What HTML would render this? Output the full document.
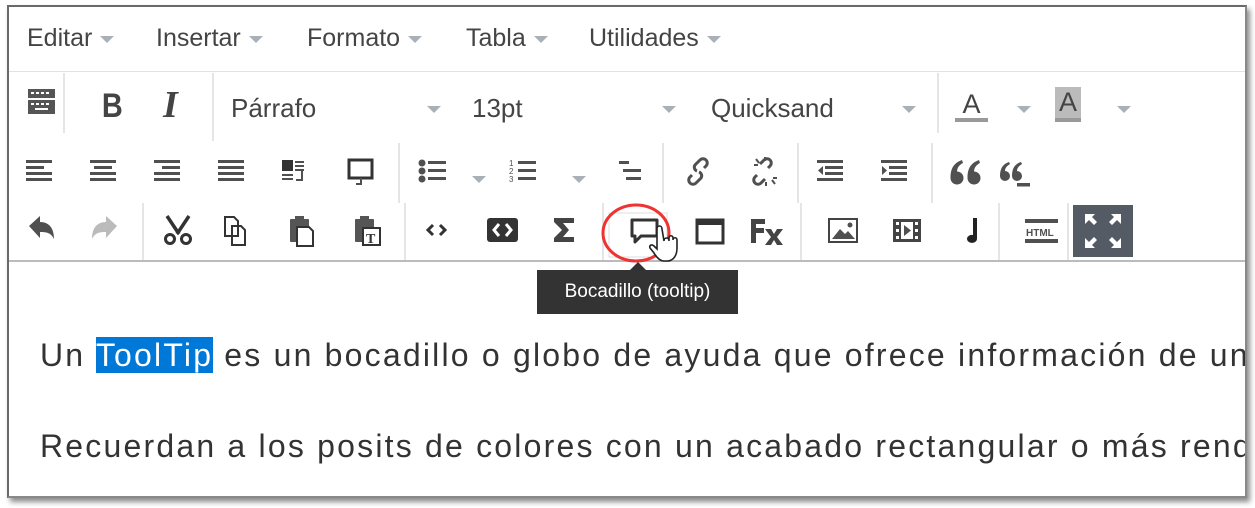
<!DOCTYPE html>
<html><head><meta charset="utf-8"><style>
*{margin:0;padding:0;box-sizing:border-box}
body{width:1255px;height:508px;background:#fff;position:relative;overflow:hidden;font-family:"Liberation Sans",sans-serif}
#frame{position:absolute;left:7px;top:5px;width:1240px;height:493px;border:2px solid #6a6a6a;border-right-color:#888;border-bottom-color:#888;box-shadow:3px 4px 5px rgba(0,0,0,.45);background:#fff;overflow:hidden}
.abs{position:absolute}
.menu{font-size:25px;color:#444;top:17px}
.car{display:inline-block;width:0;height:0;border-left:7px solid transparent;border-right:7px solid transparent;border-top:7px solid #aab0b8;vertical-align:middle;margin-left:8px}
.hl{position:absolute;height:1px;background:#e2e2e6}
.vl{position:absolute;width:2px;background:#e5e5e8}
.sel{font-size:26px;color:#444;top:86px}
svg.i{position:absolute}
.txt{position:absolute;left:31px;font-size:32px;color:#333;white-space:nowrap;letter-spacing:2.2px}
</style></head><body>
<div id="frame">
<div class="abs menu" style="left:18px">Editar<span class="car"></span></div>
<div class="abs menu" style="left:147px">Insertar<span class="car"></span></div>
<div class="abs menu" style="left:298px">Formato<span class="car"></span></div>
<div class="abs menu" style="left:457px">Tabla<span class="car"></span></div>
<div class="abs menu" style="left:580px">Utilidades<span class="car"></span></div>
<div class="hl" style="left:0;top:64px;width:1240px"></div>
<div class="hl" style="left:0;top:253px;width:1240px;background:#bbb;height:2px"></div>

<div class="vl" style="left:54px;top:66px;height:60px"></div>
<div class="vl" style="left:203px;top:66px;height:68px"></div>
<div class="vl" style="left:928px;top:66px;height:60px"></div>
<div class="vl" style="left:389px;top:136px;height:60px"></div>
<div class="vl" style="left:653px;top:136px;height:60px"></div>
<div class="vl" style="left:788px;top:136px;height:60px"></div>
<div class="vl" style="left:922px;top:136px;height:60px"></div>
<div class="vl" style="left:133px;top:196px;height:57px"></div>
<div class="vl" style="left:395px;top:196px;height:57px"></div>
<div class="vl" style="left:593px;top:196px;height:57px"></div>
<div class="vl" style="left:791px;top:196px;height:57px"></div>
<div class="vl" style="left:989px;top:196px;height:57px"></div>
<div class="vl" style="left:1058px;top:196px;height:57px"></div>

<svg class="i" style="left:17px;top:78px" width="32" height="34" viewBox="0 0 32 34"><rect x="2" y="4" width="27" height="9" fill="#555"/><rect x="2" y="15" width="27" height="14" fill="#555"/><g fill="#fff"><rect x="5" y="7" width="3" height="2"/><rect x="10" y="7" width="3" height="2"/><rect x="15" y="7" width="3" height="2"/><rect x="20" y="7" width="3" height="2"/><rect x="5" y="18" width="3" height="2"/><rect x="10" y="18" width="3" height="2"/><rect x="15" y="18" width="3" height="2"/><rect x="20" y="18" width="3" height="2"/><rect x="9" y="23" width="13" height="2"/></g></svg>
<div class="abs" style="left:91px;top:80px;font-size:34px;font-weight:bold;color:#444;transform:scaleX(.85)">B</div>
<div class="abs" style="left:154px;top:76px;font-size:38px;font-style:italic;font-weight:bold;font-family:'Liberation Serif',serif;color:#444">I</div>
<div class="abs sel" style="left:222px">Párrafo</div><div class="abs" style="left:410px;top:94px"><span class="car"></span></div>
<div class="abs sel" style="left:463px">13pt</div><div class="abs" style="left:645px;top:94px"><span class="car"></span></div>
<div class="abs sel" style="left:702px">Quicksand</div><div class="abs" style="left:885px;top:94px"><span class="car"></span></div>
<div class="abs" style="left:946px;top:82px;font-size:27px;color:#444;width:33px;text-align:center">A</div><div class="abs" style="left:946px;top:111px;width:33px;height:4px;background:#999"></div>
<div class="abs" style="left:1000px;top:94px"><span class="car"></span></div>
<div class="abs" style="left:1046px;top:80px;width:26px;height:32px;background:#bbb;font-size:27px;color:#444;text-align:center;line-height:30px">A</div><div class="abs" style="left:1046px;top:111px;width:26px;height:4px;background:#999"></div>
<div class="abs" style="left:1100px;top:94px"><span class="car"></span></div>

<svg class="i" width="1060" height="50" style="left:0;top:140px" viewBox="0 0 1060 50"><g fill="#505050">
<rect x="17" y="13" width="26" height="3"/><rect x="17" y="19" width="18" height="3"/><rect x="17" y="25" width="26" height="3"/><rect x="17" y="31" width="26" height="3"/>
<rect x="81" y="13" width="26" height="3"/><rect x="85" y="19" width="18" height="3"/><rect x="81" y="25" width="26" height="3"/><rect x="81" y="31" width="26" height="3"/>
<rect x="145" y="13" width="26" height="3"/><rect x="153" y="19" width="18" height="3"/><rect x="145" y="25" width="26" height="3"/><rect x="145" y="31" width="26" height="3"/>
<rect x="209" y="13" width="26" height="3"/><rect x="209" y="19" width="26" height="3"/><rect x="209" y="25" width="26" height="3"/><rect x="209" y="31" width="26" height="3"/>
<rect x="273" y="13" width="11" height="11" fill="#333"/><rect x="286" y="14" width="9" height="2"/><rect x="286" y="18" width="9" height="2"/><rect x="286" y="22" width="9" height="2"/><rect x="273" y="27" width="11" height="2"/><rect x="273" y="31" width="11" height="2"/><path d="M293 24v9h-6" stroke="#505050" stroke-width="2" fill="none"/>
<rect x="340" y="13" width="23" height="18" fill="none" stroke="#333" stroke-width="3"/><path d="M352 31v6h-5" stroke="#505050" stroke-width="2" fill="none"/>
<circle cx="413" cy="16" r="3.5"/><circle cx="413" cy="24" r="3.5"/><circle cx="413" cy="32" r="3.5"/><rect x="419" y="14" width="18" height="3"/><rect x="419" y="22" width="18" height="3"/><rect x="419" y="30" width="18" height="3"/>
<path d="M463 29l7 7 7-7z" fill="#aab0b8"/>
<text x="500" y="19" font-size="8" font-family="Liberation Sans">1</text><text x="500" y="27" font-size="8" font-family="Liberation Sans">2</text><text x="500" y="35" font-size="8" font-family="Liberation Sans">3</text><rect x="509" y="14" width="18" height="3"/><rect x="509" y="22" width="18" height="3"/><rect x="509" y="30" width="18" height="3"/>
<path d="M563 29l7 7 7-7z" fill="#aab0b8"/>
<rect x="610" y="14" width="10" height="3"/><rect x="614" y="22" width="18" height="3"/><rect x="617" y="30" width="15" height="3"/>
<path d="M683 28l-2 2a4 4 0 0 0 6 6l5-5a4 4 0 0 0-2-6M695 21l2-2a4 4 0 0 0-6-6l-5 5a4 4 0 0 0 2 6" stroke="#505050" stroke-width="3" fill="none"/>
<path d="M748 28l-2 2a4 4 0 0 0 6 6l4-4M759 21l2-2a4 4 0 0 0-6-6l-4 4" stroke="#505050" stroke-width="3" fill="none"/><path d="M747 12l3 4M745 18h4M766 37l-3-4M768 31h-4M756 10v4M757 35v4" stroke="#505050" stroke-width="2"/>
<rect x="808" y="13" width="26" height="3"/><rect x="816" y="19" width="18" height="3"/><rect x="816" y="25" width="18" height="3"/><rect x="808" y="31" width="26" height="3"/><path d="M814 19v9l-5-4.5z"/>
<rect x="872" y="13" width="26" height="3"/><rect x="880" y="19" width="18" height="3"/><rect x="880" y="25" width="18" height="3"/><rect x="872" y="31" width="26" height="3"/><path d="M873 19v9l5-4.5z"/>
<circle cx="948" cy="31" r="6.5"/><path d="M941.5 31C941.5 21 945 16 953 13l1 3c-4 2-6 5-6 9z"/>
<circle cx="965" cy="31" r="6.5"/><path d="M958.5 31C958.5 21 962 16 970 13l1 3c-4 2-6 5-6 9z"/>
<circle cx="996" cy="29" r="5"/><path d="M991 29C991 21 994 17 1000 15l1 2c-3 2-5 4-5 7z"/>
<circle cx="1008" cy="29" r="5"/><path d="M1003 29C1003 21 1006 17 1012 15l1 2c-3 2-5 4-5 7z"/>
<rect x="1008" y="36" width="13" height="3.5"/>
</g></svg>

<svg class="i" width="1060" height="55" style="left:0;top:203px" viewBox="0 0 1060 55"><g fill="#505050">
<path d="M20 16l11-10v6c9 0 14 6 14 17-3-6-7-7-14-7v6z"/>
<path d="M108 16l-11-10v6c-9 0-14 6-14 17 3-6 7-7 14-7v6z" fill="#bbb"/>
<path d="M158 6l12 18M180 6l-12 18" stroke="#333" stroke-width="3.5"/><circle cx="161" cy="29" r="4.5" fill="none" stroke="#333" stroke-width="3"/><circle cx="177" cy="29" r="4.5" fill="none" stroke="#333" stroke-width="3"/>
<path d="M216 7h9l4 4v15h-13z M223 16h9l4 4v15h-13z" fill="#fff" stroke="#333" stroke-width="2"/>
<rect x="281" y="9" width="19" height="23" rx="1" fill="#555"/><rect x="286" y="6" width="9" height="5" fill="#555"/><path d="M288 17h12l4 4v15h-16z" fill="#fff" stroke="#333" stroke-width="2"/>
<rect x="346" y="9" width="19" height="23" rx="1" fill="#555"/><rect x="351" y="6" width="9" height="5" fill="#555"/><rect x="354" y="18" width="17" height="17" fill="#fff" stroke="#333" stroke-width="2"/><text x="357" y="33" font-size="14" font-weight="bold" font-family="Liberation Serif" fill="#333">T</text>
<path d="M424 15l-5 5 5 5M431 15l5 5-5 5" stroke="#333" stroke-width="3" fill="none"/>
<rect x="478" y="8" width="31" height="24" rx="3" fill="#333"/><path d="M490 14l-5 6 5 6M497 14l5 6-5 6" stroke="#fff" stroke-width="3" fill="none"/>
<path d="M545 8h20v5h-11l6 7-6 7h11v5h-20v-4l8-8-8-8z" fill="#444"/>
<rect x="600" y="3" width="58" height="44" fill="none" stroke="#ddd" stroke-width="1"/>
<path d="M623 10h25v16h-16l-6 6v-6h-3z" fill="none" stroke="#333" stroke-width="3" stroke-linejoin="round"/>
<rect x="688" y="10" width="26" height="23" fill="none" stroke="#333" stroke-width="3"/><rect x="688" y="10" width="26" height="5" fill="#333"/>
<path d="M742 9h14v5h-9v4h8v5h-8v10h-5z" fill="#444"/><path d="M756 19h6l3 5 3-5h6l-6 8 6 8h-6l-3-5-3 5h-6l6-8z" fill="#444"/>
<rect x="820" y="9" width="28" height="23" fill="none" stroke="#444" stroke-width="2"/><path d="M823 29l8-10 5 5 3-3 7 8z"/><circle cx="841" cy="15" r="2.5"/>
<rect x="884" y="9" width="28" height="23" fill="#444"/><g fill="#fff"><rect x="887" y="12" width="3" height="3"/><rect x="887" y="19" width="3" height="3"/><rect x="887" y="26" width="3" height="3"/><rect x="906" y="12" width="3" height="3"/><rect x="906" y="19" width="3" height="3"/><rect x="906" y="26" width="3" height="3"/><rect x="892" y="12" width="12" height="17"/></g><path d="M895 15v11l7-5.5z"/>
<path d="M964 8h4v21a5 4 0 1 1-4-4z" fill="#222"/>
<rect x="1016" y="9" width="33" height="4"/><rect x="1016" y="29" width="33" height="4"/><text x="1017" y="26" font-size="10" font-weight="bold" font-family="Liberation Sans">HTML</text>
</g></svg>
<div class="abs" style="left:1064px;top:198px;width:60px;height:52px;background:#555b64"></div>
<svg class="i" width="60" height="52" style="left:1064px;top:198px"><g fill="#fff"><path d="M12 9h10l-3 3 5 5-3 3-5-5-4 4zM48 9h-10l3 3-5 5 3 3 5-5 4 4zM12 43h10l-3-3 5-5-3-3-5 5-4-4zM48 43h-10l3-3-5-5 3-3 5 5 4-4z"/></g></svg>

<svg class="i" width="100" height="90" style="left:585px;top:190px;overflow:visible"><ellipse cx="42" cy="36" rx="33" ry="28" fill="none" stroke="#e33" stroke-width="3"/>
<path d="M70 44c0-4 5-4 5 0v-3c0-3 4-3 4 0v2c0-3 4-3 4 0v8c0 8-4 13-10 13h-3c-4 0-7-3-10-8l-4-5c-1-3 2-4 4-2l3 3v-20c0-4 5-4 5 0z" fill="#fff" stroke="#222" stroke-width="1.6"/></svg>

<div class="abs" style="left:621px;top:255px;width:0;height:0;border-left:8px solid transparent;border-right:8px solid transparent;border-bottom:8px solid #333"></div>
<div class="abs" style="left:528px;top:263px;width:201px;height:44px;background:#333;color:#fff;font-size:19px;line-height:44px;text-align:center">Bocadillo (tooltip)</div>

<div class="txt" style="top:330px">Un <span style="background:#0078d7;color:#fff">ToolTip</span> es un bocadillo o globo de ayuda que ofrece información de un</div>
<div class="txt" style="top:421px">Recuerdan a los posits de colores con un acabado rectangular o más rend</div>
</div>
</body></html>
